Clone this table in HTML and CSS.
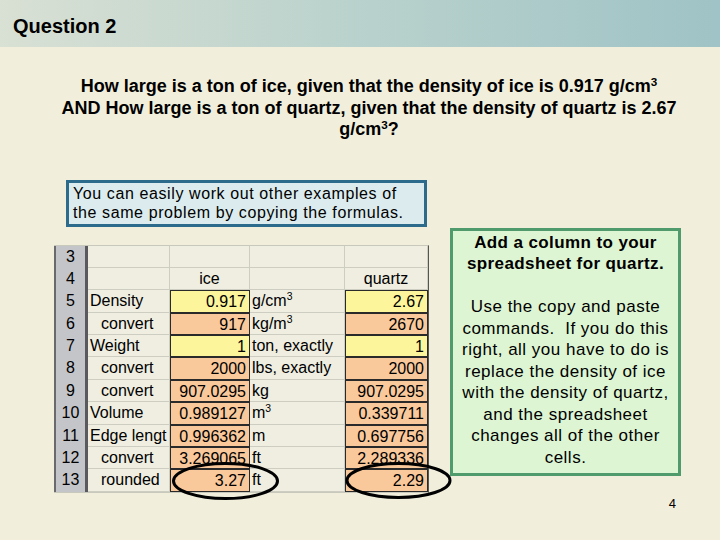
FILE: index.html
```html
<!DOCTYPE html>
<html>
<head>
<meta charset="utf-8">
<link rel="stylesheet" href="styles.css">
</head>
<body>
<div class="header"><h1 class="title">Question 2</h1></div>
<p class="question">How large is a ton of ice, given that the density of ice is 0.917 g/cm<sup>3</sup><br>AND How large is a ton of quartz, given that the density of quartz is 2.67<br>g/cm<sup>3</sup>?</p>
<div class="note">You can easily work out other examples of<br>the same problem by copying the formulas.</div>
<div class="row">
  <div class="sheet-wrap">
    <div class="sheet">
      <div class="rh">3</div><div class="c"></div><div class="c"></div><div class="c"></div><div class="c"></div>
      <div class="rh">4</div><div class="c"></div><div class="c ctr">ice</div><div class="c"></div><div class="c ctr">quartz</div>
      <div class="rh">5</div><div class="c">Density</div><div class="c num y">0.917</div><div class="c">g/cm<sup>3</sup></div><div class="c num y">2.67</div>
      <div class="rh">6</div><div class="c ind">convert</div><div class="c num o">917</div><div class="c">kg/m<sup>3</sup></div><div class="c num o">2670</div>
      <div class="rh">7</div><div class="c">Weight</div><div class="c num y">1</div><div class="c">ton, exactly</div><div class="c num y">1</div>
      <div class="rh">8</div><div class="c ind">convert</div><div class="c num o">2000</div><div class="c">lbs, exactly</div><div class="c num o">2000</div>
      <div class="rh">9</div><div class="c ind">convert</div><div class="c num o">907.0295</div><div class="c">kg</div><div class="c num o">907.0295</div>
      <div class="rh">10</div><div class="c">Volume</div><div class="c num o">0.989127</div><div class="c">m<sup>3</sup></div><div class="c num o">0.339711</div>
      <div class="rh">11</div><div class="c">Edge lengt</div><div class="c num o">0.996362</div><div class="c">m</div><div class="c num o">0.697756</div>
      <div class="rh">12</div><div class="c ind">convert</div><div class="c num o">3.269065</div><div class="c">ft</div><div class="c num o">2.289336</div>
      <div class="rh">13</div><div class="c ind">rounded</div><div class="c num o">3.27</div><div class="c">ft</div><div class="c num o">2.29</div>
    </div>
    <svg class="rings" width="420" height="270" viewBox="0 0 420 270">
      <ellipse cx="171.5" cy="236" rx="52" ry="17.5" fill="none" stroke="#000" stroke-width="3"/>
      <ellipse cx="344.5" cy="235.5" rx="51.5" ry="17" fill="none" stroke="#000" stroke-width="3"/>
    </svg>
  </div>
  <div class="tip">
    <p class="tip-bold">Add a column to your<br>spreadsheet for quartz.</p>
    <p class="tip-text">Use the copy and paste<br>commands.&nbsp; If you do this<br>right, all you have to do is<br>replace the density of ice<br>with the density of quartz,<br>and the spreadsheet<br>changes all of the other<br>cells.</p>
  </div>
</div>
<div class="footer">4</div>
</body>
</html>
```
FILE: styles.css
```css
* { box-sizing: border-box; }
html, body {
  margin: 0;
  padding: 0;
  background: #f1efdc;
  font-family: "Liberation Sans", Arial, sans-serif;
  color: #000;
}
body { width: 720px; height: 540px; overflow: hidden; }
.header {
  height: 47px;
  padding: 14px 0 0 13px;
  background: linear-gradient(to right, #d9e0d4 0%, #bcd3cd 45%, #9fc3c6 100%);
}
.title {
  margin: 0;
  font-size: 20px;
  line-height: 24px;
  font-weight: bold;
}
.question {
  margin: 29px 16px 0 34px;
  text-align: center;
  font-size: 18px;
  line-height: 21.5px;
  font-weight: bold;
}
sup {
  font-size: 0.65em;
  line-height: 0;
  vertical-align: 0.55em;
}
.note {
  margin: 39px 0 0 66px;
  width: 361px;
  height: 47px;
  border: 3px solid #2c6b8b;
  background: #dcecee;
  padding: 1px 0 0 4px;
  font-size: 16px;
  line-height: 19px;
  letter-spacing: 0.6px;
}
.row {
  display: flex;
  align-items: flex-start;
  margin: 1px 0 0 54px;
}
.sheet-wrap {
  position: relative;
  margin-top: 17px;
}
.sheet {
  display: grid;
  grid-template-columns: 34px 82px 80px 95px 83px;
  grid-template-rows: repeat(11, 22.4px);
  border-top: 1px solid #c8c8bc;
  border-right: 1px solid #555;
  border-bottom: 1px solid #c8c8bc;
  background: #efeee1;
  font-size: 16px;
}
.rh {
  background: #c4c5c9;
  border-left: 2px solid #6a6a6e;
  border-right: 3px solid #5a5a5e;
  text-align: center;
  line-height: 22px;
  font-size: 16px;
}
.c {
  border-right: 1px solid #cdcdc1;
  border-bottom: 1px solid #cdcdc1;
  line-height: 21px;
  padding: 0 2px;
  white-space: nowrap;
  overflow: hidden;
}
.ctr { text-align: center; }
.ind { padding-left: 13px; }
.num { text-align: right; padding-right: 3px; }
.y { background: #fdf59b; border: 1px solid #2a2a2a; }
.o { background: #f9c99c; border: 1px solid #2a2a2a; }
.rings {
  position: absolute;
  left: 0;
  top: 0;
  overflow: visible;
  pointer-events: none;
}
.tip {
  margin-left: 21px;
  width: 231px;
  height: 248px;
  border: 3px solid #4f9b6b;
  background: #ddf5d3;
  padding: 1px 0 0;
  text-align: center;
  font-size: 17px;
  line-height: 21.5px;
}
.tip p { margin: 0; }
.tip-bold { font-weight: bold; letter-spacing: 0.4px; margin-bottom: 21.5px !important; }
.tip-text { letter-spacing: 0.5px; }
.footer {
  margin-top: 3px;
  padding-right: 44px;
  text-align: right;
  font-size: 13px;
  line-height: 16px;
}
```
